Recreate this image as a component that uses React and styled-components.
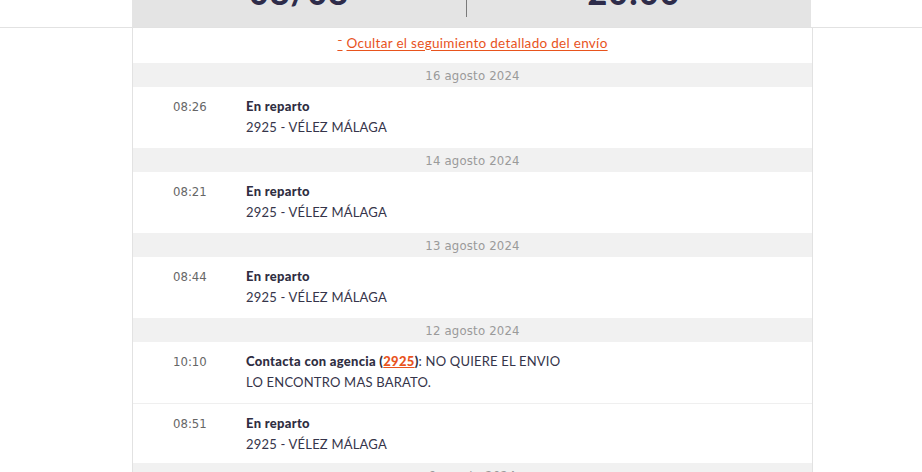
import React from "react";
import styled, { createGlobalStyle } from "styled-components";

const GlobalStyle = createGlobalStyle`
  html, body {
    margin: 0;
    padding: 0;
    background: #fff;
    overflow: hidden;
  }
  body {
    font-family: Lato, "Open Sans", sans-serif;
    color: #35344a;
  }
`;

const Page = styled.div`
  width: 922px;
  height: 472px;
  overflow: hidden;
`;

const TopBand = styled.div`
  border-bottom: 1px solid #e2e2e2;
  padding-left: 132px;
`;

const SummaryPanel = styled.div`
  width: 679px;
  height: 27px;
  background: #e4e4e4;
  display: flex;
  overflow: hidden;
`;

const SummaryCell = styled.div`
  flex: ${(p) => (p.$first ? "0 0 334px" : "1")};
  display: flex;
  justify-content: center;
  align-items: flex-start;
  height: 17px;
  border-right: ${(p) => (p.$first ? "1px solid #7a7a7a" : "none")};
`;

const SummaryValue = styled.span`
  font-family: Lato, sans-serif;
  font-weight: 900;
  font-size: 34px;
  line-height: 34px;
  margin-top: -25px;
  color: #2e2c4a;
  letter-spacing: 1px;
  margin-left: ${(p) => p.$shift || 0}px;
`;

const Column = styled.div`
  width: 679px;
  margin-left: 132px;
  border-left: 1px solid #e2e2e2;
  border-right: 1px solid #e2e2e2;
`;

const ToggleRow = styled.div`
  height: 35px;
  padding-bottom: 6px;
  box-sizing: border-box;
  display: flex;
  align-items: center;
  justify-content: center;
`;

const ToggleLink = styled.a`
  font-family: Lato, sans-serif;
  font-size: 13.5px;
  letter-spacing: 0.3px;
  color: #e8531d;
  text-decoration: underline;
  text-underline-offset: 2px;
  cursor: pointer;
`;

const Caret = styled.span`
  font-size: 12px;
  font-weight: 700;
  margin-right: 4px;
`;

const DateBar = styled.div`
  height: 24px;
  background: #f1f1f1;
  display: flex;
  align-items: center;
  justify-content: center;
  font-family: "DejaVu Sans Condensed", "Roboto", sans-serif;
  font-size: 13px;
  letter-spacing: 0.2px;
  color: #9a9a9a;
`;

const EventRow = styled.div`
  display: flex;
  padding: 9px 0 ${(p) => (p.$divided ? 8 : 10)}px;
  border-top: ${(p) => (p.$divided ? "1px solid #efefef" : "none")};
`;

const Time = styled.div`
  width: 113px;
  padding-left: 40px;
  box-sizing: border-box;
  font-family: "DejaVu Sans Condensed", "Roboto", sans-serif;
  font-size: 13px;
  line-height: 21px;
  color: #666;
`;

const Detail = styled.div`
  font-size: 13px;
  letter-spacing: 0.2px;
  line-height: 21px;
  color: #35344a;
`;

const Strong = styled.strong`
  font-weight: 900;
  letter-spacing: 0.3px;
  color: #2f2e42;
`;

const AgencyLink = styled.a`
  color: #e8531d;
  text-decoration: underline;
`;

const days = [
  {
    date: "16 agosto 2024",
    events: [{ time: "08:26", title: "En reparto", place: "2925 - VÉLEZ MÁLAGA" }],
  },
  {
    date: "14 agosto 2024",
    events: [{ time: "08:21", title: "En reparto", place: "2925 - VÉLEZ MÁLAGA" }],
  },
  {
    date: "13 agosto 2024",
    events: [{ time: "08:44", title: "En reparto", place: "2925 - VÉLEZ MÁLAGA" }],
  },
  {
    date: "12 agosto 2024",
    events: [
      { time: "10:10", agency: "2925", note: "NO QUIERE EL ENVIO", extra: "LO ENCONTRO MAS BARATO." },
      { time: "08:51", title: "En reparto", place: "2925 - VÉLEZ MÁLAGA" },
    ],
  },
  { date: "9 agosto 2024", events: [] },
];

const Event = ({ ev, divided }) => (
  <EventRow $divided={divided}>
    <Time>{ev.time}</Time>
    <Detail>
      {ev.agency ? (
        <>
          <Strong>
            Contacta con agencia (<AgencyLink>{ev.agency}</AgencyLink>)
          </Strong>
          : {ev.note}
          <br />
          {ev.extra}
        </>
      ) : (
        <>
          <Strong>{ev.title}</Strong>
          <br />
          {ev.place}
        </>
      )}
    </Detail>
  </EventRow>
);

const App = () => {
  return (
    <Page>
      <GlobalStyle />
      <TopBand>
        <SummaryPanel>
          <SummaryCell $first>
            <SummaryValue>08/08</SummaryValue>
          </SummaryCell>
          <SummaryCell>
            <SummaryValue $shift={-10}>20:00</SummaryValue>
          </SummaryCell>
        </SummaryPanel>
      </TopBand>
      <Column>
        <ToggleRow>
          <ToggleLink>
            <Caret>¯</Caret>Ocultar el seguimiento detallado del envío
          </ToggleLink>
        </ToggleRow>
        {days.map((day) => (
          <div key={day.date}>
            <DateBar>{day.date}</DateBar>
            {day.events.map((ev, i) => (
              <Event key={ev.time} ev={ev} divided={i > 0} />
            ))}
          </div>
        ))}
      </Column>
    </Page>
  );
};

export default App;
